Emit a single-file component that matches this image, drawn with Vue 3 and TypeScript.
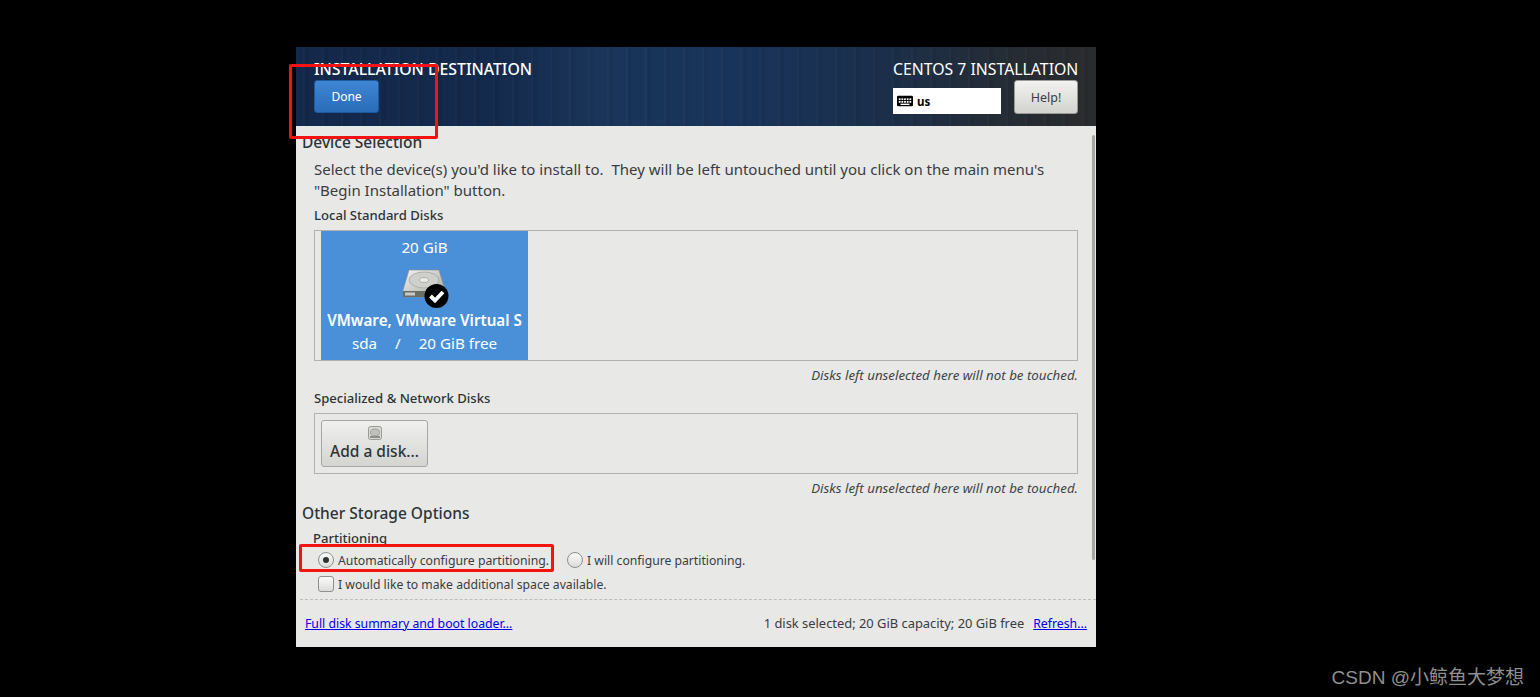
<script setup lang="ts">
const note = 'Disks left unselected here will not be touched.'
const keys: number[][] = [
  [2, 3], [5, 3], [8, 3], [11, 3], [14, 3],
  [2, 6], [5, 6], [8, 6], [11, 6], [14, 6],
]
</script>

<template>
  <div class="page">
    <main class="window">
      <header class="top">
        <div class="top-left">
          <h1 class="title">INSTALLATION DESTINATION</h1>
          <button class="done">Done</button>
        </div>
        <div class="top-right">
          <div class="product">CENTOS 7 INSTALLATION</div>
          <div class="top-controls">
            <div class="kbd">
              <svg width="16" height="12" viewBox="0 0 18 12">
                <rect width="18" height="12" rx="1.5" fill="#000" />
                <rect v-for="(k, i) in keys" :key="i" :x="k[0]" :y="k[1]" width="2" height="2" fill="#fff" />
                <rect x="4" y="9" width="10" height="1.5" fill="#fff" />
              </svg>
              <span>us</span>
            </div>
            <button class="help">Help!</button>
          </div>
        </div>
      </header>

      <section class="body">
        <div class="scrollbar"></div>
        <h2 class="heading first">Device Selection</h2>
        <p class="intro">Select the device(s) you'd like to install to.&nbsp; They will be left untouched until you click on the main menu's<br />"Begin Installation" button.</p>
        <h3 class="sub local">Local Standard Disks</h3>
        <div class="box disks">
          <div class="tile">
            <div class="size">20 GiB</div>
            <div class="disk-icon">
              <svg width="48" height="42" viewBox="0 0 48 42">
                <defs>
                  <linearGradient id="top" x1="0" y1="0" x2="1" y2="1">
                    <stop offset="0" stop-color="#f4f4f2" />
                    <stop offset="1" stop-color="#a3a49f" />
                  </linearGradient>
                </defs>
                <path d="M8 2 H38 L44 22 V29 H2 V22 Z" fill="url(#top)" stroke="#85877f" stroke-width="0.6" />
                <ellipse cx="23" cy="12" rx="15" ry="8" fill="#cfd0cc" stroke="#a0a19d" stroke-width="0.7" />
                <ellipse cx="23" cy="12" rx="4.5" ry="2.4" fill="#ececea" stroke="#8f908c" stroke-width="0.6" />
                <rect x="2" y="23" width="42" height="6" fill="#6a6c66" />
                <rect x="4" y="24.5" width="10" height="3" fill="#c9cac6" />
                <circle cx="35.5" cy="28" r="12" fill="#000" />
                <path d="M29.5 28 L34 32.5 L42 24" fill="none" stroke="#fff" stroke-width="4" />
              </svg>
            </div>
            <div class="model">VMware, VMware Virtual S</div>
            <div class="meta"><span>sda</span><span class="slash">/</span><span>20 GiB free</span></div>
          </div>
        </div>
        <p class="note n1">{{ note }}</p>
        <h3 class="sub special">Specialized &amp; Network Disks</h3>
        <div class="box network">
          <button class="add">
            <svg width="14" height="14" viewBox="0 0 14 14">
              <rect x="0.5" y="0.5" width="13" height="13" rx="2" fill="#d8d8d5" stroke="#9a9b97" />
              <ellipse cx="7" cy="6.5" rx="4.5" ry="3.5" fill="#bfc0bc" stroke="#8f908c" stroke-width="0.7" />
              <rect x="2" y="10" width="10" height="2" fill="#8d8e8a" />
            </svg>
            <span>Add a disk...</span>
          </button>
        </div>
        <p class="note n2">{{ note }}</p>
        <h2 class="heading other">Other Storage Options</h2>
        <h3 class="sub parting">Partitioning</h3>
        <div class="options first-row">
          <label class="opt auto"><span class="radio on"></span>Automatically configure partitioning.</label>
          <label class="opt second"><span class="radio"></span>I will configure partitioning.</label>
        </div>
        <div class="options">
          <label class="opt"><span class="check"></span>I would like to make additional space available.</label>
        </div>
        <div class="dashed"></div>
        <footer class="foot">
          <a class="link">Full disk summary and boot loader...</a>
          <div class="foot-right">
            <span class="summary">1 disk selected; 20 GiB capacity; 20 GiB free</span>
            <a class="link">Refresh...</a>
          </div>
        </footer>
      </section>
    </main>
    <div class="mark mark-a"></div>
    <div class="mark mark-b"></div>
    <div class="watermark">CSDN @小鲸鱼大梦想</div>
  </div>
</template>

<style>
html, body { margin: 0; background: #000; }
</style>

<style scoped>
.page {
  position: relative;
  width: 1540px;
  height: 697px;
  overflow: hidden;
  background: #000;
  padding: 47px 0 0 296px;
  box-sizing: border-box;
  font-family: "Noto Sans", "Liberation Sans", sans-serif;
  color: #2e3436;
}
.window { width: 800px; height: 600px; display: flex; flex-direction: column; }
.top {
  height: 79px;
  box-sizing: border-box;
  padding: 0 18px;
  display: flex;
  justify-content: space-between;
  color: #fff;
  background:
    repeating-linear-gradient(90deg, rgba(255,255,255,0) 0 7px, rgba(120,160,210,.03) 7px 9px, rgba(0,0,0,.05) 9px 13px, rgba(255,255,255,0) 13px 19px),
    linear-gradient(90deg, #13284a 0%, #142a4c 25%, #1a3559 38%, #19345a 55%, #1a2f4c 72%, #262c33 90%, #2a2b2d 100%);
}
.title { margin: 13px 0 0; height: 19px; font-size: 15.8px; line-height: 19px; font-weight: 500; white-space: nowrap; }
.done {
  display: block;
  margin-top: 1px;
  width: 65px;
  height: 33px;
  padding: 0;
  border: 1px solid #1c5a9e;
  border-radius: 3px;
  background: linear-gradient(#3f86d4, #2a6cb8);
  color: #fff;
  font: 12px "Noto Sans", sans-serif;
}
.top-right { width: 185px; display: flex; flex-direction: column; }
.product { margin-top: 13px; height: 19px; font-size: 15.8px; line-height: 19px; text-align: right; white-space: nowrap; }
.top-controls { display: flex; justify-content: space-between; align-items: flex-start; margin-top: 1px; }
.kbd {
  margin-top: 8px;
  width: 108px;
  height: 26px;
  box-sizing: border-box;
  padding-left: 4px;
  background: #fff;
  color: #000;
  display: flex;
  align-items: center;
  gap: 4px;
  font-size: 11.5px;
  font-weight: 700;
}
.help {
  width: 64px;
  height: 34px;
  padding: 0;
  border: 1px solid #9a9a96;
  border-radius: 3px;
  background: linear-gradient(#f2f2f0, #d2d2ce);
  color: #3a3f41;
  font: 12.5px "Noto Sans", sans-serif;
}
.body { position: relative; flex: 1; background: #e8e8e7; padding: 0 18px; overflow: hidden; }
.scrollbar { position: absolute; left: 796px; top: 9px; width: 3px; height: 425px; background: #a4a5a4; border-radius: 2px; }
.heading { margin: 0 0 0 -12px; font-size: 15.5px; line-height: 20px; font-weight: 500; color: #2e3436; }
.first { margin-top: 6px; }
.intro { margin: 7px 0 0; font-size: 15px; line-height: 21px; color: #383d3f; white-space: nowrap; }
.sub { margin: 0; font-size: 13.1px; line-height: 18px; font-weight: 500; color: #2e3436; }
.local { margin-top: 5px; }
.box { border: 1px solid #b2b3b0; box-sizing: border-box; }
.disks { margin-top: 6px; width: 764px; height: 131px; padding: 0 6px; }
.tile {
  width: 207px;
  height: 129px;
  background: #4a90d9;
  color: #fff;
  text-align: center;
  display: flex;
  flex-direction: column;
  align-items: center;
  font-size: 15.2px;
}
.size { margin-top: 6px; line-height: 20px; }
.disk-icon { margin-top: 11px; height: 42px; }
.disk-icon svg { display: block; }
.model { line-height: 20px; font-weight: 600; white-space: nowrap; }
.meta { margin-top: 3px; line-height: 20px; display: flex; }
.slash { margin: 0 18px; }
.note { margin: 0; text-align: right; font-size: 13.3px; line-height: 16px; font-style: italic; color: #3f4446; }
.n1 { margin-top: 6px; }
.special { margin-top: 6px; }
.network { margin-top: 6px; width: 764px; height: 61px; padding: 6px; }
.add {
  width: 107px;
  height: 47px;
  padding: 5px 0 0;
  border: 1px solid #a6a7a4;
  border-radius: 3px;
  background: linear-gradient(#f0f0ee, #d4d4d1);
  color: #2e3436;
  display: flex;
  flex-direction: column;
  align-items: center;
  font: 500 15.5px "Noto Sans", sans-serif;
}
.add span { line-height: 20px; margin-top: 1px; }
.n2 { margin-top: 6px; }
.other { margin-top: 7px; }
.parting { margin-top: 6px; margin-left: -1px; }
.options { display: flex; align-items: center; height: 24px; padding-left: 4px; font-size: 12.2px; color: #383d3f; }
.first-row { margin-top: 1px; }
.opt { display: flex; align-items: center; gap: 4px; white-space: nowrap; }
.auto { font-size: 12.25px; }
.second { margin-left: 18px; }
.radio {
  width: 16px;
  height: 16px;
  box-sizing: border-box;
  border: 1px solid #8f908d;
  border-radius: 50%;
  background: linear-gradient(#fafaf9, #dcdcda);
  display: flex;
  align-items: center;
  justify-content: center;
}
.radio.on::after { content: ""; width: 6px; height: 6px; border-radius: 50%; background: #2e3436; }
.check {
  width: 16px;
  height: 16px;
  box-sizing: border-box;
  border: 1px solid #8f908d;
  border-radius: 3px;
  background: linear-gradient(#fafaf9, #dcdcda);
}
.dashed { margin: 3px -18px 0 -14px; border-top: 1px dashed #bdbebb; }
.foot {
  margin: 15px -9px 0 -9px;
  display: flex;
  justify-content: space-between;
  font-size: 12.25px;
  line-height: 18px;
  color: #383d3f;
}
.foot-right { display: flex; align-items: baseline; gap: 9px; }
.summary { font-size: 12.9px; line-height: 16px; }
.link { color: #0000ee; text-decoration: underline; }
.mark { position: absolute; border: 3px solid #f4140f; border-radius: 2px; box-sizing: border-box; }
.mark-a { left: 289px; top: 64px; width: 149px; height: 75px; }
.mark-b { left: 299px; top: 544px; width: 255px; height: 28px; }
.watermark {
  position: absolute;
  right: 16px;
  top: 666px;
  font: 19px/24px "Liberation Sans", "Noto Sans CJK SC", sans-serif;
  color: #8f8f8f;
}
</style>
